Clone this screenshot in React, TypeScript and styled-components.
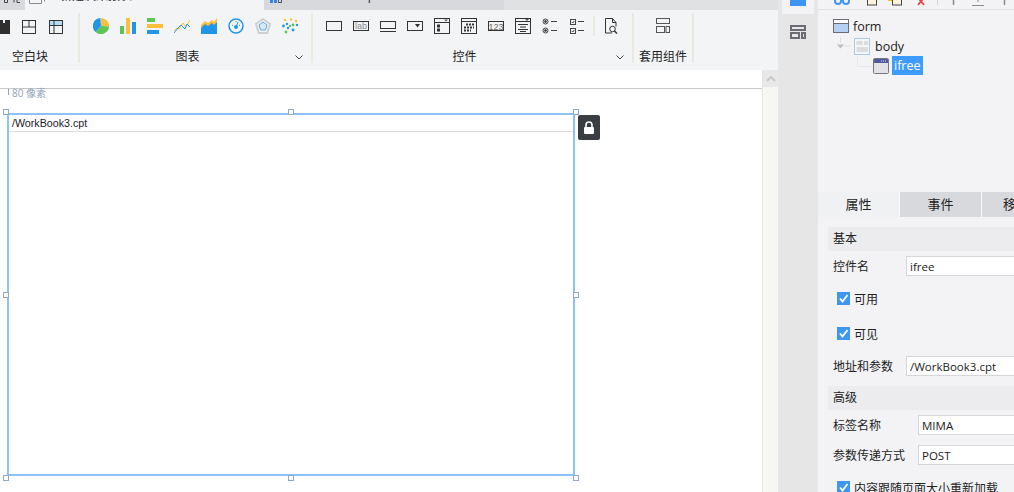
import React from 'react';
import styled, { createGlobalStyle } from 'styled-components';

const GlobalStyle = createGlobalStyle`
    html, body {
        margin: 0;
        padding: 0;
        background: #fff;
    }
    body {
        font-family: "Open Sans", "Noto Sans CJK SC", sans-serif;
        font-size: 12px;
        color: #222;
    }
`

const Page = styled.div`
    display: flex;
    width: 1014px;
    height: 492px;
    overflow: hidden;
`

const Main = styled.div`
    display: flex;
    flex-direction: column;
    flex: 0 0 778px;
`

const TabStrip = styled.div`
    display: flex;
    flex: none;
    height: 10px;
    overflow: hidden;
    background: #e0e1e3;
`

const Tab = styled.div<{ $width: number, $bg: string, $pad: number, $gap: number }>`
    display: flex;
    align-items: flex-start;
    gap: ${p => p.$gap}px;
    flex: 0 0 ${p => p.$width}px;
    min-width: 0;
    padding-left: ${p => p.$pad}px;
    box-sizing: border-box;
    overflow: hidden;
    background: ${p => p.$bg};
`

const TabLabel = styled.span`
    font-size: 12px;
    line-height: 14px;
    margin-top: -11px;
    white-space: nowrap;
`

const Toolbar = styled.div`
    display: flex;
    flex: none;
    height: 60px;
    box-sizing: border-box;
    padding-top: 3px;
    padding-bottom: 7px;
    background: #f3f4f6;
`

const Section = styled.div<{ $width: number, $pad: number }>`
    display: flex;
    flex-direction: column;
    flex: 0 0 ${p => p.$width}px;
    box-sizing: border-box;
    padding-left: ${p => p.$pad}px;
    border-right: 2px solid #e9e8e1;
`

const IconRow = styled.div`
    display: flex;
    align-items: flex-start;
    gap: 11px;
    padding-top: 5px;
    height: 16px;
`

const RowDivider = styled.div`
    flex: 0 0 2px;
    height: 20px;
    margin: -2px -3px 0;
    background: #e9e8e1;
`

const SectionFoot = styled.div<{ $pad: number, $trail?: number }>`
    display: flex;
    align-items: center;
    margin-top: auto;
    margin-bottom: -1px;
    margin-left: -${p => p.$pad}px;
    padding-right: ${p => p.$trail || 0}px;
    height: 14px;
`

const SectionLabel = styled.div`
    flex: 1;
    text-align: center;
    line-height: 14px;
    color: #1c1c1c;
`

const Chevron = styled.svg`
    flex: 0 0 8px;
    margin-right: 8px;
`

const Workspace = styled.div`
    flex: 1;
    display: flex;
    min-height: 0;
`

const Canvas = styled.div`
    flex: 1;
    background: #fff;
`

const RulerLine = styled.div`
    height: 18px;
    border-bottom: 1px solid #c8c8c8;
`

const RulerHint = styled.div`
    display: flex;
    align-items: flex-start;
    height: 24px;
    padding-left: 8px;
`

const RulerTick = styled.div`
    width: 1px;
    height: 6px;
    background: #8fa0b5;
    margin-right: 3px;
`

const RulerText = styled.span`
    font-size: 10px;
    line-height: 8px;
    color: #8fa0b5;
`

const Widget = styled.div`
    position: relative;
    margin-left: 7px;
    width: 568px;
    height: 363px;
    box-sizing: border-box;
    border: 2px solid #8cc1f9;
`

const WidgetTitle = styled.div`
    height: 16px;
    padding-left: 3px;
    border-bottom: 1px solid #dcdcdc;
    font-family: "Liberation Sans", sans-serif;
    font-size: 10.7px;
    line-height: 16px;
    color: #1a1a2a;
`

const Handle = styled.div<{ $left: string, $top: string }>`
    position: absolute;
    left: ${p => p.$left};
    top: ${p => p.$top};
    width: 4px;
    height: 4px;
    background: #fff;
    border: 1px solid #8fa9c2;
`

const LockButton = styled.div`
    position: absolute;
    left: calc(100% + 5px);
    top: 0;
    display: flex;
    align-items: center;
    justify-content: center;
    width: 22px;
    height: 25px;
    border-radius: 2px;
    background: #3a3d42;
`

const Scrollbar = styled.div`
    flex: 0 0 16px;
    box-sizing: border-box;
    background: #f6f6f2;
    border-left: 1px solid #e6e6e0;
`

const ScrollUp = styled.div`
    display: flex;
    align-items: center;
    justify-content: center;
    height: 17px;
    background: #e8e8e8;
`

const SideStrip = styled.div`
    display: flex;
    flex-direction: column;
    align-items: center;
    flex: 0 0 40px;
    background: #e6e6e6;
`

const SideActive = styled.div`
    display: flex;
    justify-content: center;
    width: 32px;
    height: 14px;
    background: #f3f3f6;
`

const SideBlue = styled.div`
    width: 16px;
    height: 6px;
    background: #3f95f5;
`

const SideIcon = styled.svg`
    margin-top: 11px;
`

const Panel = styled.div`
    flex: 0 0 196px;
    display: flex;
    flex-direction: column;
    overflow: hidden;
    background: #f3f3f6;
`

const PanelTools = styled.div`
    display: flex;
    flex: none;
    align-items: flex-start;
    height: 9px;
    padding-left: 16px;
    overflow: hidden;
    border-bottom: 1px solid #e1e1e4;
`

const ToolIcon = styled.svg<{ $gap: number }>`
    flex: 0 0 16px;
    margin-left: ${p => p.$gap}px;
`

const Tree = styled.div`
    flex: none;
    height: 176px;
    padding-top: 6px;
`

const TreeRow = styled.div<{ $pad: number }>`
    display: flex;
    align-items: center;
    height: 20px;
    padding-left: ${p => p.$pad}px;
    font-size: 12.500px;
    color: #1c1c1c;
`

const TreeText = styled.span<{ $selected?: boolean, $gap: number }>`
    align-self: flex-start;
    margin-left: ${p => p.$gap}px;
    padding: ${p => p.$selected ? '0 2px' : '1px 0 0'};
    height: 19px;
    line-height: 19px;
    color: ${p => p.$selected ? '#fff' : 'inherit'};
    background: ${p => p.$selected ? '#3f9cff' : 'transparent'};
`

const PropTabs = styled.div`
    display: flex;
    flex: none;
    gap: 1px;
    height: 25px;
    background: #f8f8f9;
`

const PropTab = styled.div<{ $active?: boolean }>`
    flex: 0 0 81px;
    text-align: center;
    font-size: 13px;
    line-height: 25px;
    background: ${p => p.$active ? '#f0f1f3' : '#d8d9dd'};
`

const PropForm = styled.div`
    flex: none;
    padding-left: 10px;
`

const GroupBar = styled.div`
    margin-top: 10px;
    height: 24px;
    padding-left: 5px;
    line-height: 24px;
    font-size: 12px;
    background: #ececee;
`

const FieldRow = styled.div<{ $top: number }>`
    display: flex;
    align-items: center;
    height: 20px;
    margin-top: ${p => p.$top}px;
    padding-left: 5px;
`

const FieldLabel = styled.label<{ $width: number }>`
    flex: 0 0 ${p => p.$width}px;
`

const FieldInput = styled.input`
    flex: 0 0 220px;
    box-sizing: border-box;
    height: 20px;
    padding: 0 3px;
    border: 1px solid #d6d6d8;
    outline: none;
    background: #fff;
    font-family: inherit;
    font-size: 11.500px;
    color: #1c1c1c;
`

const CheckRow = styled.div<{ $top?: number }>`
    display: flex;
    align-items: center;
    gap: 4px;
    height: 35px;
    margin-top: ${p => p.$top || 0}px;
    padding-left: 9px;
`

const CheckBox = styled.div`
    display: flex;
    align-items: center;
    justify-content: center;
    flex: 0 0 13px;
    height: 13px;
    background: #3d97f0;
`

function BlankIcons(): JSX.Element {
    return (
        <>
            <svg width="16" height="16" viewBox="0 0 16 16" style={{ marginLeft: -6 }}>
                <rect x="0" y="2" width="16" height="14" fill="#2f2f2f" />
                <rect x="3" y="2" width="2" height="3" fill="#f3f4f6" />
                <rect x="9" y="2" width="2" height="3" fill="#f3f4f6" />
            </svg>
            <svg width="16" height="16" viewBox="0 0 16 16" fill="none" stroke="#333">
                <rect x="1.5" y="2.5" width="13" height="13" />
                <path d="M1.5 9h13M8 2.5v6.5" />
            </svg>
            <svg width="16" height="16" viewBox="0 0 16 16" fill="none" stroke="#333">
                <rect x="2" y="3" width="12" height="4" fill="#b6dcf5" stroke="none" />
                <rect x="1.5" y="2.5" width="13" height="13" />
                <path d="M1.5 7.5h13M6 2.5v13" />
            </svg>
        </>
    );
}

function ChartIcons(): JSX.Element {
    return (
        <>
            <svg width="16" height="16" viewBox="0 0 16 16">
                <path d="M8 8V0a8 8 0 0 1 8 8.5z" fill="#fbbf3c" />
                <path d="M8 8l8 .5a8 8 0 0 1-13.5 5.4z" fill="#5ec453" />
                <path d="M8 8l-5.5 5.9A8 8 0 0 1 7.4 0z" fill="#2196e8" />
            </svg>
            <svg width="16" height="16" viewBox="0 0 16 16">
                <rect x="0" y="8" width="4" height="8" fill="#5ec453" />
                <rect x="6" y="0" width="4" height="16" fill="#fbbf3c" />
                <rect x="12" y="4" width="4" height="12" fill="#2196e8" />
            </svg>
            <svg width="16" height="16" viewBox="0 0 16 16">
                <rect x="0" y="0" width="8" height="4" fill="#5ec453" />
                <rect x="0" y="6" width="16" height="4" fill="#fbbf3c" />
                <rect x="0" y="12" width="12" height="4" fill="#2196e8" />
            </svg>
            <svg width="16" height="16" viewBox="0 0 16 16" fill="none">
                <path d="M0 13l3-3 2 1 4-6 2 3 2-1 3-5" stroke="#fbbf3c" />
                <path d="M0 15l4-5 3-3 2 2 2 2 2-5 3 3" stroke="#2196e8" />
            </svg>
            <svg width="16" height="16" viewBox="0 0 16 16">
                <path d="M0 7l4-4 3 2 4-3 2 2 3-4v10H0z" fill="#fbbf3c" />
                <path d="M0 10l4-4 3 2 4-3 2 2 3-3v12H0z" fill="#2196e8" />
            </svg>
            <svg width="16" height="16" viewBox="0 0 16 16" fill="none" stroke="#2196e8">
                <circle cx="8" cy="8" r="7" strokeWidth="1.500" />
                <circle cx="8" cy="9" r="2" fill="#2196e8" stroke="none" />
                <path d="M8 9l2-5M4 7l1 .5M12 7l-1 .5M8 3v1" />
            </svg>
            <svg width="16" height="16" viewBox="0 0 16 16" fill="none">
                <path d="M8 1l7 5-2.700 9H3.700L1 6z" stroke="#cfcfcf" strokeWidth="2" />
                <path d="M8 4l4 3-1.500 5h-5L4 7z" stroke="#5fa8e0" fill="#d6e8f4" />
            </svg>
            <svg width="16" height="16" viewBox="0 0 16 16">
                <circle cx="3" cy="2" r="1.200" fill="#fbbf3c" />
                <circle cx="9" cy="1.500" r="1.200" fill="#fbbf3c" />
                <circle cx="14" cy="3" r="1.200" fill="#fbbf3c" />
                <circle cx="1.500" cy="8" r="1.400" fill="#2196e8" />
                <circle cx="5" cy="6" r="1.200" fill="#2196e8" />
                <circle cx="11" cy="7" r="1.400" fill="#5ec453" />
                <circle cx="15" cy="7" r="1.200" fill="#2196e8" />
                <circle cx="8" cy="8" r="1.200" fill="#5ec453" />
                <circle cx="6" cy="10" r="1.200" fill="#2196e8" />
                <circle cx="4" cy="14" r="1.400" fill="#5ec453" />
                <circle cx="11" cy="12" r="1.400" fill="#2196e8" />
            </svg>
        </>
    );
}

function ControlIcons(): JSX.Element {
    return (
        <>
            <svg width="16" height="16" viewBox="0 0 16 16" fill="none" stroke="#333">
                <rect x=".5" y="3.500" width="15" height="9" />
            </svg>
            <svg width="16" height="16" viewBox="0 0 16 16" fill="none" stroke="#333">
                <rect x=".5" y="3.500" width="15" height="9" />
                <text x="8" y="11" textAnchor="middle" fontSize="9" fontFamily="Liberation Sans" fill="#8a8a8a" stroke="none">lab</text>
            </svg>
            <svg width="16" height="16" viewBox="0 0 16 16" fill="none" stroke="#333">
                <rect x=".5" y="3.500" width="15" height="7" />
                <path d="M0 13.500h16" />
            </svg>
            <svg width="16" height="16" viewBox="0 0 16 16" fill="none" stroke="#333">
                <rect x=".5" y="3.500" width="15" height="9" />
                <path d="M8 6h5l-2.500 3.500z" fill="#333" stroke="none" />
            </svg>
            <svg width="16" height="16" viewBox="0 0 16 16" fill="none" stroke="#333">
                <rect x=".5" y=".5" width="15" height="15" />
                <path d="M.5 4.500h15" />
                <path d="M10 1.500h4l-2 2z" fill="#555" stroke="none" />
                <rect x="3.500" y="7" width="2" height="2" />
                <rect x="3.500" y="11" width="2" height="2" />
            </svg>
            <svg width="16" height="16" viewBox="0 0 16 16" fill="none" stroke="#333">
                <rect x=".5" y=".5" width="15" height="15" />
                <path d="M.5 3.500h15" />
                <path d="M5 6.500h9M3 9.500h10M3 12.500h7" strokeWidth="2" strokeDasharray="2 1" />
            </svg>
            <svg width="16" height="16" viewBox="0 0 16 16" fill="none" stroke="#333">
                <rect x=".5" y="3.500" width="15" height="9" />
                <text x="8" y="11.500" textAnchor="middle" fontSize="9" fontFamily="Liberation Sans" fill="#666" stroke="none">123</text>
            </svg>
            <svg width="16" height="16" viewBox="0 0 16 16" fill="none" stroke="#333">
                <rect x=".5" y=".5" width="15" height="15" />
                <path d="M.5 3.500h15M3 6.500h10M5 9h6M3 11.500h10M5 13.500h6" />
                <path d="M10 1h4l-2 2z" fill="#555" stroke="none" />
            </svg>
            <svg width="16" height="16" viewBox="0 0 16 16" fill="none" stroke="#444">
                <circle cx="3.500" cy="3.500" r="2.500" />
                <circle cx="3.500" cy="3.500" r="1" fill="#444" />
                <circle cx="3.500" cy="12.500" r="2.500" />
                <circle cx="3.500" cy="12.500" r="1" fill="#444" />
                <path d="M9 3.500h6M9 12.500h6" />
            </svg>
            <svg width="16" height="16" viewBox="0 0 16 16" fill="none" stroke="#444">
                <rect x="1.500" y="1.500" width="5" height="5" />
                <path d="M2.800 4l1 1 1.500-2" />
                <rect x="1.500" y="10.500" width="5" height="5" />
                <path d="M2.800 13l1 1 1.500-2" />
                <path d="M9 3.500h6M9 12.500h6" />
            </svg>
            <RowDivider />
            <svg width="16" height="16" viewBox="0 0 16 16" fill="none" stroke="#333">
                <path d="M9 15H2.500V.5h7l3.500 4v4" />
                <path d="M9.500.5v4H13" />
                <circle cx="9.500" cy="11" r="2.800" />
                <path d="M11.500 13l2.500 2.500" strokeWidth="1.500" />
            </svg>
        </>
    );
}

function SectionChevron(): JSX.Element {
    return (
        <Chevron width="8" height="5" viewBox="0 0 8 5" fill="none" stroke="#444">
            <path d="M.5.500L4 4 7.500.5" />
        </Chevron>
    );
}

function RibbonTabs(): JSX.Element {
    return (
        <TabStrip>
            <Tab $width={25} $bg="#d8d9dc" $pad={4} $gap={0}>
                <svg width="17" height="3" viewBox="0 0 17 3" fill="none" stroke="#444">
                    <path d="M.5 0v2.500h3V0M10 0v2.500M13 0v2.500h3" />
                </svg>
            </Tab>
            <Tab $width={239} $bg="#f3f4f6" $pad={4} $gap={15}>
                <svg width="16" height="4" viewBox="0 0 16 4" fill="none" stroke="#8a8a8e">
                    <path d="M.5 0v3.500h12V0M15.500 0v1.500" />
                </svg>
                <TabLabel>新建决策报表1</TabLabel>
            </Tab>
            <Tab $width={240} $bg="#d8d9dc" $pad={6} $gap={12}>
                <svg width="12" height="3" viewBox="0 0 12 3">
                    <rect x="0" y="0" width="3" height="3" fill="#2f86d8" />
                    <rect x="4" y="0" width="3" height="3" fill="#2f86d8" />
                    <rect x="8.500" y="-3" width="3" height="5.500" fill="none" stroke="#555" />
                </svg>
                <TabLabel>WorkBook3.cpt</TabLabel>
            </Tab>
        </TabStrip>
    );
}

function RibbonSections(): JSX.Element {
    return (
        <Toolbar>
            <Section $width={80} $pad={0}>
                <IconRow><BlankIcons /></IconRow>
                <SectionFoot $pad={0} $trail={18}><SectionLabel>空白块</SectionLabel></SectionFoot>
            </Section>
            <Section $width={233} $pad={13}>
                <IconRow><ChartIcons /></IconRow>
                <SectionFoot $pad={13}>
                    <SectionLabel>图表</SectionLabel>
                    <SectionChevron />
                </SectionFoot>
            </Section>
            <Section $width={321} $pad={13}>
                <IconRow><ControlIcons /></IconRow>
                <SectionFoot $pad={13}>
                    <SectionLabel>控件</SectionLabel>
                    <SectionChevron />
                </SectionFoot>
            </Section>
            <Section $width={60} $pad={21}>
                <IconRow>
                    <svg width="16" height="16" viewBox="0 0 16 16" fill="none" stroke="#555">
                        <rect x="1.500" y=".5" width="13" height="5" />
                        <rect x="1.500" y="8.500" width="8" height="6" />
                        <rect x="11" y="8.500" width="3.500" height="6" />
                    </svg>
                </IconRow>
                <SectionFoot $pad={21}><SectionLabel>套用组件</SectionLabel></SectionFoot>
            </Section>
        </Toolbar>
    );
}

function WidgetBox(): JSX.Element {
    const spots = [
        ['-6px', '-6px'], ['279px', '-6px'], ['100%', '-6px'],
        ['-6px', '177px'], ['100%', '177px'],
        ['-6px', 'calc(100% + 1px)'], ['279px', 'calc(100% + 1px)'], ['100%', 'calc(100% + 1px)'],
    ];
    return (
        <Widget>
            <WidgetTitle>/WorkBook3.cpt</WidgetTitle>
            {spots.map(([left, top], i) => <Handle key={i} $left={left} $top={top} />)}
            <LockButton>
                <svg width="12" height="14" viewBox="0 0 12 14">
                    <path d="M3 6V4a3 3 0 0 1 6 0v2" fill="none" stroke="#fff" strokeWidth="1.600" />
                    <rect x="1" y="6" width="10" height="7" rx="1" fill="#fff" />
                </svg>
            </LockButton>
        </Widget>
    );
}

function PanelToolIcons(): JSX.Element {
    return (
        <PanelTools>
            <ToolIcon $gap={0} width="16" height="9" viewBox="0 0 16 9" fill="none" stroke="#3f95f5" strokeWidth="2">
                <circle cx="4" cy="1" r="3" />
                <circle cx="12" cy="1" r="3" />
            </ToolIcon>
            <ToolIcon $gap={14} width="16" height="9" viewBox="0 0 16 9" fill="#fdf3d8" stroke="#444">
                <rect x="3.500" y="-5" width="9" height="10" />
            </ToolIcon>
            <ToolIcon $gap={7} width="16" height="9" viewBox="0 0 16 9">
                <rect x="1" y="-5" width="8" height="6" fill="#f5b731" />
                <rect x="5.500" y="-5" width="9" height="10" fill="#fdf3d8" stroke="#444" />
            </ToolIcon>
            <ToolIcon $gap={10} width="16" height="9" viewBox="0 0 16 9" fill="none" stroke="#e8423c" strokeWidth="1.800">
                <path d="M3 -5l8 10M13 -5L5 5" />
            </ToolIcon>
            <ToolIcon $gap={0} width="16" height="9" viewBox="0 0 16 9" fill="none" stroke="#d4d4d6">
                <path d="M8.500 0v5" />
            </ToolIcon>
            <ToolIcon $gap={0} width="16" height="9" viewBox="0 0 16 9" fill="none" stroke="#8a8a8e">
                <path d="M8.500 0v5" strokeWidth="1.500" />
            </ToolIcon>
            <ToolIcon $gap={9} width="16" height="9" viewBox="0 0 16 9" fill="none" stroke="#8a8a8e">
                <path d="M8 0v2M2 5.500h12" />
            </ToolIcon>
            <ToolIcon $gap={10} width="16" height="9" viewBox="0 0 16 9" fill="none" stroke="#8a8a8e">
                <path d="M8.500 0v5" strokeWidth="1.500" />
            </ToolIcon>
        </PanelTools>
    );
}

function ComponentTree(): JSX.Element {
    return (
        <Tree>
            <TreeRow $pad={15}>
                <svg width="16" height="14" viewBox="0 0 16 14">
                    <rect x=".5" y=".5" width="15" height="13" fill="#fff" stroke="#6a6b74" />
                    <rect x="1" y="5" width="14" height="8" fill="#b4d0f2" />
                    <path d="M1 4.500h14" stroke="#6a6b74" />
                </svg>
                <TreeText $gap={4}>form</TreeText>
            </TreeRow>
            <TreeRow $pad={16}>
                <svg width="16" height="18" viewBox="0 0 16 18">
                    <path d="M6.500 0v6M10 9h6" stroke="#e0e0e2" fill="none" />
                    <path d="M3 7.500h7l-3.500 4z" fill="#bdbdc0" />
                </svg>
                <svg width="16" height="17" viewBox="0 0 16 17" style={{ marginLeft: 4 }}>
                    <rect x=".5" y=".5" width="15" height="16" fill="#f6f6f8" stroke="#a9cbe3" />
                    <rect x="2.500" y="3" width="6" height="4" fill="#dcdcdf" />
                    <rect x="10" y="3" width="4" height="4" fill="#dcdcdf" />
                    <rect x="2.500" y="9" width="11.500" height="5" fill="#dcdcdf" />
                </svg>
                <TreeText $gap={5}>body</TreeText>
            </TreeRow>
            <TreeRow $pad={39}>
                <svg width="16" height="20" viewBox="0 0 16 20">
                    <path d="M.5 0v10.500H16" stroke="#e8e8ea" fill="none" />
                </svg>
                <svg width="16" height="16" viewBox="0 0 16 16">
                    <rect x=".5" y=".5" width="15" height="15" rx="1" fill="#e2e2e6" stroke="#76777f" />
                    <rect x="1" y="1" width="14" height="4" fill="#4f5aa0" />
                    <path d="M8 3h5" stroke="#dfe3f5" strokeDasharray="1 1" />
                </svg>
                <TreeText $gap={3} $selected>ifree</TreeText>
            </TreeRow>
        </Tree>
    );
}

function Tick(): JSX.Element {
    return (
        <CheckBox>
            <svg width="11" height="11" viewBox="0 0 11 11" fill="none" stroke="#fff" strokeWidth="1.800">
                <path d="M2 5.500l2.500 3L9.500 2" />
            </svg>
        </CheckBox>
    );
}

function Properties(): JSX.Element {
    return (
        <>
            <PropTabs>
                <PropTab $active>属性</PropTab>
                <PropTab>事件</PropTab>
                <PropTab>移动端</PropTab>
            </PropTabs>
            <PropForm>
                <GroupBar>基本</GroupBar>
                <FieldRow $top={5}>
                    <FieldLabel $width={73}>控件名</FieldLabel>
                    <FieldInput readOnly value="ifree" />
                </FieldRow>
                <CheckRow $top={5}><Tick />可用</CheckRow>
                <CheckRow><Tick />可见</CheckRow>
                <FieldRow $top={5}>
                    <FieldLabel $width={73}>地址和参数</FieldLabel>
                    <FieldInput readOnly value="/WorkBook3.cpt" />
                </FieldRow>
                <GroupBar>高级</GroupBar>
                <FieldRow $top={5}>
                    <FieldLabel $width={85}>标签名称</FieldLabel>
                    <FieldInput readOnly value="MIMA" />
                </FieldRow>
                <FieldRow $top={10}>
                    <FieldLabel $width={85}>参数传递方式</FieldLabel>
                    <FieldInput readOnly value="POST" />
                </FieldRow>
                <CheckRow $top={5}><Tick />内容跟随页面大小重新加载</CheckRow>
            </PropForm>
        </>
    );
}

function App(): JSX.Element {
    return (
        <Page>
            <GlobalStyle />
            <Main>
                <RibbonTabs />
                <RibbonSections />
                <Workspace>
                    <Canvas>
                        <RulerLine />
                        <RulerHint>
                            <RulerTick />
                            <RulerText>80 像素</RulerText>
                        </RulerHint>
                        <WidgetBox />
                    </Canvas>
                    <Scrollbar>
                        <ScrollUp>
                            <svg width="10" height="6" viewBox="0 0 10 6" fill="none" stroke="#c8c8c8" strokeWidth="2">
                                <path d="M1 5l4-4 4 4" />
                            </svg>
                        </ScrollUp>
                    </Scrollbar>
                </Workspace>
            </Main>
            <SideStrip>
                <SideActive><SideBlue /></SideActive>
                <SideIcon width="16" height="14" viewBox="0 0 16 14" fill="none" stroke="#6a6b74" strokeWidth="2">
                    <rect x="1" y="1" width="14" height="4" />
                    <rect x="1" y="8" width="8" height="5" />
                    <rect x="12" y="8" width="3" height="5" />
                </SideIcon>
            </SideStrip>
            <Panel>
                <PanelToolIcons />
                <ComponentTree />
                <Properties />
            </Panel>
        </Page>
    );
}

export default App
